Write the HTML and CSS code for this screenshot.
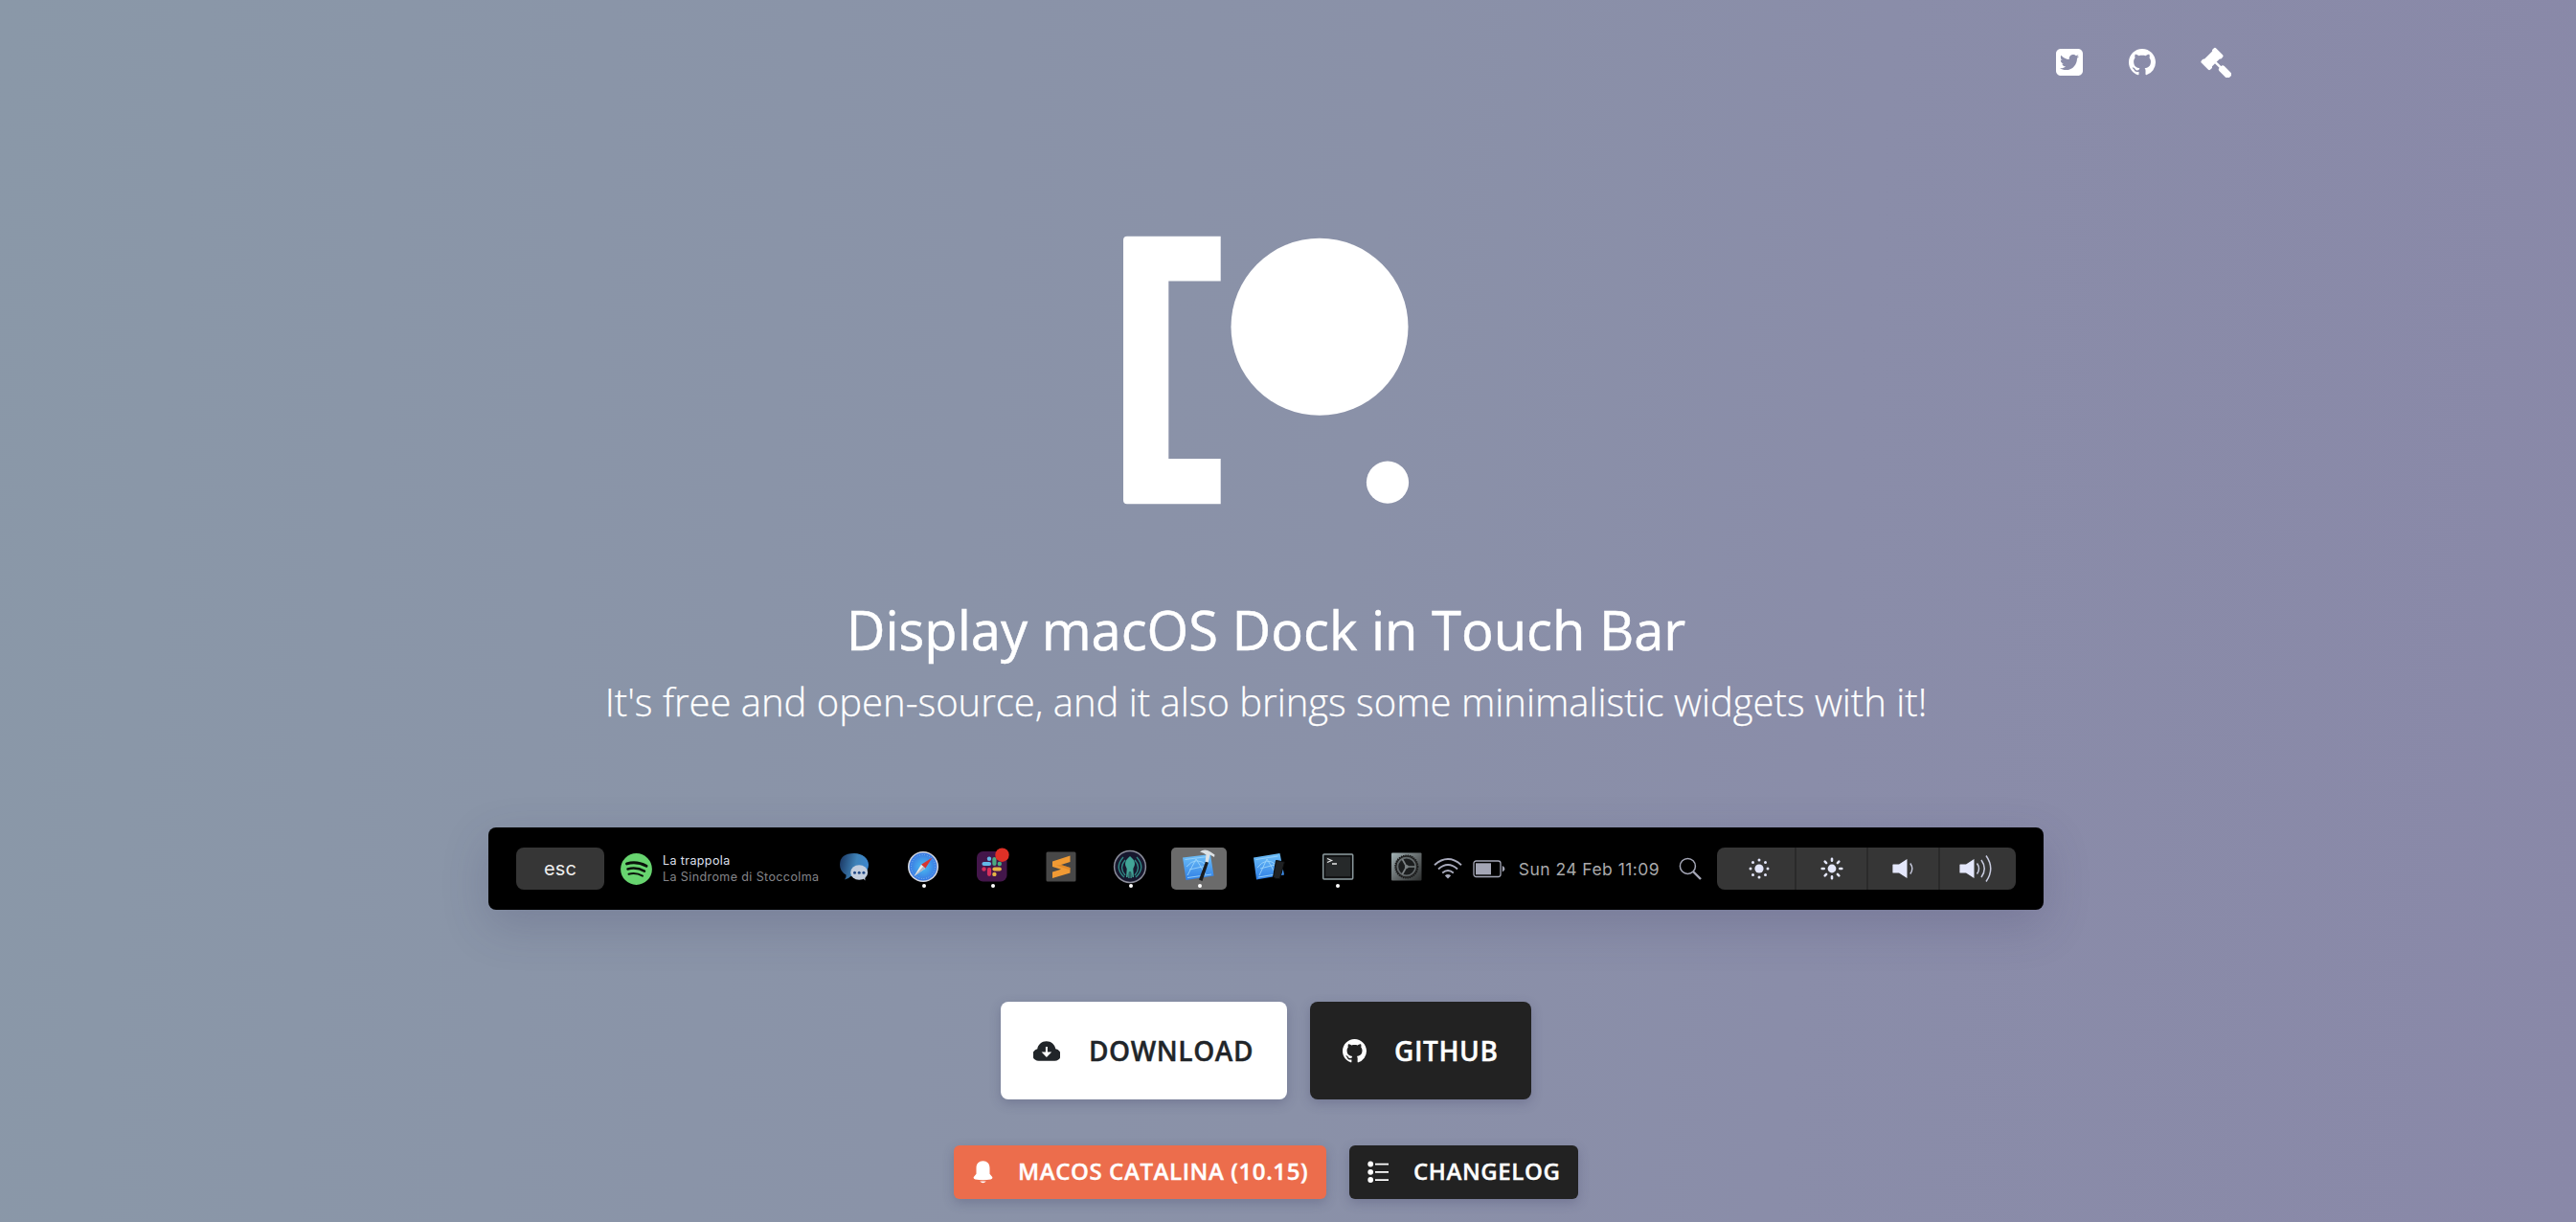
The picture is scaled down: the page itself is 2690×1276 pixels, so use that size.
FILE: index.html
```html
<!DOCTYPE html>
<html lang="en">
<head>
<meta charset="utf-8">
<title>Pock</title>
<link rel="stylesheet" href="styles.css">
</head>
<body>
<svg class="defs" aria-hidden="true">
  <defs>
    <symbol id="octocat" viewBox="0 0 16 16"><path fill="currentColor" d="M8 0C3.58 0 0 3.58 0 8c0 3.54 2.29 6.53 5.47 7.59.4.07.55-.17.55-.38 0-.19-.01-.82-.01-1.49-2.01.37-2.53-.49-2.69-.94-.09-.23-.48-.94-.82-1.13-.28-.15-.68-.52-.01-.53.63-.01 1.08.58 1.23.82.72 1.21 1.87.87 2.33.66.07-.52.28-.87.51-1.07-1.78-.2-3.64-.89-3.64-3.95 0-.87.31-1.59.82-2.15-.08-.2-.36-1.02.08-2.12 0 0 .67-.21 2.2.82.64-.18 1.32-.27 2-.27.68 0 1.36.09 2 .27 1.53-1.04 2.2-.82 2.2-.82.44 1.1.16 1.92.08 2.12.51.56.82 1.27.82 2.15 0 3.07-1.87 3.75-3.65 3.95.29.25.54.73.54 1.48 0 1.07-.01 1.93-.01 2.2 0 .21.15.46.55.38A8.013 8.013 0 0016 8c0-4.42-3.58-8-8-8z"/></symbol>
    <linearGradient id="sheet" x1="0" y1="0" x2="0" y2="1"><stop offset="0" stop-color="#6fc0f8"/><stop offset="1" stop-color="#2f7fe6"/></linearGradient>
    <linearGradient id="bubble" x1="0" y1="0.3" x2="1" y2="0.5"><stop offset="0" stop-color="#1c3a66"/><stop offset="0.55" stop-color="#3f83b8"/><stop offset="1" stop-color="#3c86cf"/></linearGradient>
    <radialGradient id="compass"><stop offset="0" stop-color="#4cc0f2"/><stop offset="1" stop-color="#3a78e2"/></radialGradient>
    <linearGradient id="metal" x1="0" y1="0" x2="1" y2="1"><stop offset="0" stop-color="#a3b3b6"/><stop offset="0.5" stop-color="#646a6b"/><stop offset="1" stop-color="#2c2e2e"/></linearGradient>
  </defs>
</svg>

<nav class="nav">
  <svg width="28" height="28" viewBox="0 32 448 448"><path fill="#fff" d="M368 32H80C35 32 0 67 0 112v288c0 45 35 80 80 80h288c45 0 80-35 80-80V112c0-45-35-80-80-80zm-16.900 158.800c.2 2.800.2 5.700.2 8.500 0 86.700-66 186.600-186.600 186.600-37.200 0-71.700-10.800-100.700-29.400 5.300.6 10.400.8 15.800.8 30.700 0 58.900-10.400 81.400-28-28.800-.6-53-19.500-61.300-45.500 10.100 1.500 19.200 1.500 29.600-1.200-30-6.100-52.500-32.500-52.500-64.400v-.8c8.700 4.900 18.900 7.900 29.600 8.300a65.447 65.447 0 0 1-29.200-54.600c0-12.200 3.200-23.400 8.900-33.100 32.300 39.800 80.800 65.800 135.200 68.600-9.300-44.500 24-80.600 64-80.600 18.900 0 35.900 7.900 47.900 20.700 14.800-2.800 29-8.300 41.600-15.800-4.900 15.200-15.200 28-28.800 36.100 13.200-1.400 26-5.100 37.800-10.200-8.900 13.100-20.100 24.700-32.900 34z"/></svg>
  <svg width="28" height="28"><use href="#octocat"/></svg>
  <svg width="32" height="32" viewBox="0 0 32 32"><g fill="#fff" transform="translate(12 12.500) rotate(45)"><rect x="-6.600" y="-10.800" width="13.200" height="5.200" rx="1.800"/><rect x="-6.600" y="5.600" width="13.200" height="5.200" rx="1.800"/><rect x="-5.600" y="-8" width="11.200" height="16"/><rect x="5" y="-1.200" width="9" height="2.400"/><rect x="12" y="-3.700" width="14.500" height="7.400" rx="2.400"/></g></svg>
</nav>

<main class="hero">
  <svg class="logo" width="300" height="282" viewBox="1172 246 300 282" fill="#fff"><path d="M1177 246.700h97.700v46.900h-54.400V479h54.400v47.300H1177a4 4 0 0 1-4-4V250.700a4 4 0 0 1 4-4z"/><circle cx="1378" cy="341.300" r="92.500"/><circle cx="1449" cy="503.600" r="22.100"/></svg>
  <h1 class="title">Display macOS Dock in Touch Bar</h1>
  <p class="subtitle">It's free and open-source, and it also brings some minimalistic widgets with it!</p>

  <div class="touchbar">
    <span class="esc">esc</span>
    <svg class="spotify" width="33" height="33" viewBox="0 0 33 33"><circle cx="16.500" cy="16.500" r="16.400" fill="#67d46f"/><g fill="none" stroke="#0a120b" stroke-linecap="round"><path stroke-width="3" d="M6.500 10.900q10.500-3 20.500 2.400"/><path stroke-width="2.500" d="M7.500 16.500q9-2.600 17.500 2.200"/><path stroke-width="2" d="M8.500 21.700q7.500-2 14.500 1.900"/></g></svg>
    <div class="track"><span>La trappola</span><span class="artist">La Sindrome di Stoccolma</span></div>

    <div class="dock">
      <div class="app"><svg width="34" height="34" viewBox="0 0 34 34"><path fill="url(#bubble)" d="M17 3c8.500 0 15 5 15 12s-6.500 12.500-15 12.500q-2 0-3.700-.4Q11 30 7 30.500 9 28 8.500 25.500 2 22 2 15 2 3 17 3z"/><ellipse cx="22.200" cy="23" rx="9" ry="7.700" fill="#c3cede"/><path fill="#c3cede" d="M25 28l3.500 3.500-.5-5z"/><g fill="#234a86"><circle cx="17.500" cy="23.300" r="1.500"/><circle cx="22.200" cy="23.300" r="1.500"/><circle cx="26.900" cy="23.300" r="1.500"/></g></svg></div>
      <div class="app running"><svg width="34" height="34" viewBox="0 0 34 34"><circle cx="17" cy="17" r="16" fill="#d3d7df"/><circle cx="17" cy="17" r="14.400" fill="url(#compass)"/><circle cx="17" cy="17" r="12.500" fill="none" stroke="#8fc4f2" stroke-width="1" stroke-dasharray=".8 1.800"/><path fill="#d9352f" d="M26.500 7.500L19.300 18.700l-4.300-4z"/><path fill="#f1ede9" d="M7.500 27L15 14.700l4.300 4z"/><path fill="#a8b4c4" d="M7.500 27l9.700-10.200 2.100 1.900z"/></svg></div>
      <div class="app running"><svg width="34" height="40" viewBox="0 -3 34 40" overflow="visible"><rect x="1" y="1" width="31.500" height="31.500" rx="6.500" fill="#43164a"/><g stroke-width="4.200" stroke-linecap="round"><path stroke="#63b9e8" d="M8.500 14h5.500"/><path stroke="#4aab80" d="M19.400 9v5"/><path stroke="#e5b545" d="M19.500 19.500h5.300"/><path stroke="#d6305c" d="M14 19.800v5"/></g><g><circle cx="14" cy="8.800" r="2.200" fill="#63b9e8"/><circle cx="24.800" cy="14" r="2.200" fill="#4aab80"/><circle cx="19.400" cy="24.900" r="2.200" fill="#e5b545"/><circle cx="8.500" cy="19.500" r="2.200" fill="#d6305c"/></g><circle cx="27.500" cy="4.700" r="7.200" fill="#df3026"/></svg></div>
      <div class="app"><svg width="34" height="34" viewBox="0 0 34 34"><rect x="1.500" y="1.500" width="31" height="31" rx="1.500" fill="#484848"/><path fill="#f09a34" d="M8 11.500L26.500 5.500v6.500l-9.500 3 9.500 3v5.500L8 29v-6.500l9-2.800-9-2.700z"/><path fill="#d67b1e" d="M17 15l9.500 3v2.500L12 15.500z" opacity=".5"/></svg></div>
      <div class="app running"><svg width="36" height="36" viewBox="0 0 36 36"><circle cx="18" cy="18" r="16.400" fill="#17182e" stroke="#8a8c99" stroke-width="1.500"/><g fill="none" stroke="#2f8783" stroke-width="1.400"><path d="M11 8Q1 19 12 29M13 11q-7 8 0 16M25 8q10 11-1 21M23 11q7 8 0 16"/></g><path fill="#42a597" d="M18 7c3 2.500 5 5 5 8 0 2.500-1.500 3.500-1.700 5.500L22 29h-1.500l-.8-6v7h-1.200v-7h-1v7h-1.200v-7l-.8 6H14l.7-8.500C14.500 18.500 13 17.500 13 15c0-3 2-5.500 5-8z"/></svg></div>
      <div class="app running active"><svg width="58" height="44" viewBox="0 0 58 44"><path fill="url(#sheet)" d="M12 10.500L41 7l3.500 22.500L15.500 34z"/><path fill="none" stroke="#9bd4fb" stroke-width=".9" d="M14.500 12.500l24-3M17 31.500l25-3.500M17 29L26 12l10 16M19 23l18-4M16 20q10-12 22-1"/><path fill="#191b1d" d="M36 14.500l3 1-6.500 19.500-3.500-1.500z"/><path fill="#dce1e4" d="M30 4.500q5-4 11 0l4.500 3-.5 2.500-4.500-2.500-1.700 8-3.300-.8 1-7.200q-2.500-2-6.500-3z"/></svg></div>
      <div class="app"><svg width="36" height="34" viewBox="0 0 36 34"><path fill="url(#sheet)" d="M2 7.500L29.500 3 34 25.500 5 30.500z"/><path fill="none" stroke="#9bd4fb" stroke-width=".9" d="M4.500 9.500l23-3.500M7 28l24-4M8 26l8-17 9 15M9 19l15-4M6 18q9-12 20-3"/><path fill="#1f2123" stroke="#08090a" d="M25.500 10.500l9 1.500-5 17.500q-4 1-7-1.500z"/></svg></div>
      <div class="app running"><svg width="34" height="30" viewBox="0 0 34 30"><rect x="1.700" y="2" width="31" height="26" rx="1" fill="#26292a" stroke="#8b999d" stroke-width="1.500"/><rect x="3.500" y="4" width="27.400" height="22" fill="none" stroke="#08090a" stroke-width="1.300"/><path fill="none" stroke="#e6e6e6" stroke-width="1.300" d="M6 6.500l4.500 2L6 10.500M11 12h5"/></svg></div>
      <div class="app"><svg width="34" height="34" viewBox="0 0 34 34"><rect x="1" y="2.500" width="31.500" height="29" rx="1" fill="url(#metal)"/><circle cx="16.800" cy="17" r="11.600" fill="none" stroke="#17191a" stroke-width="2" stroke-dasharray="1.300 1"/><circle cx="16.800" cy="17" r="9.300" fill="#1b1d1e" stroke="#62686a" stroke-width="1.500"/><circle cx="16.800" cy="17" r="11" fill="none" stroke="#222" stroke-width="1.300"/><path stroke="#7b8183" stroke-width="1.700" d="M16.800 17h9M16.800 17l-4.500-8M16.800 17l-4.500 8"/><circle cx="16.800" cy="17" r="2" fill="#7b8183"/></svg></div>
    </div>

    <svg class="wifi" width="30" height="22" viewBox="0 0 30 22" fill="none" stroke="#a9abbc" stroke-width="1.900"><path d="M1 7.200Q15-5 29 7.200M5 11.500q10-8.800 20 0M9.200 15.500q5.800-4.800 11.600 0"/><path fill="#a9abbc" stroke="none" d="M11.800 18.200q3.200-2.500 6.400 0L15 21.500z"/></svg>
    <svg class="battery" width="34" height="19" viewBox="0 0 34 19"><rect x="1" y="1" width="28" height="16.500" rx="2.500" fill="none" stroke="#a4a6b6" stroke-width="1.300"/><rect x="3" y="3.300" width="16" height="12" fill="#a4a6b6"/><path fill="#a4a6b6" d="M30.800 6q2.500.8 2.500 3.200t-2.500 3.300z"/></svg>
    <span class="clock">Sun 24 Feb 11:09</span>
    <svg class="search" width="24" height="24" viewBox="0 0 24 24" fill="none" stroke="#a4a6b6"><circle cx="9.400" cy="9.400" r="8" stroke-width="1.500"/><path stroke-width="2.400" d="M15 15l8 8"/></svg>

    <div class="controls">
      <span class="control dim"><svg width="24" height="24" viewBox="-12 -12 24 24" fill="#e4e7fb"><circle r="4.600"/><circle cy="-9" r="1.500"/><circle cy="9" r="1.500"/><circle cx="-9" r="1.500"/><circle cx="9" r="1.500"/><circle cx="-6.500" cy="-6.500" r="1.500"/><circle cx="6.500" cy="-6.500" r="1.500"/><circle cx="-6.500" cy="6.500" r="1.500"/><circle cx="6.500" cy="6.500" r="1.500"/></svg></span>
      <span class="control"><svg width="24" height="24" viewBox="-12 -12 24 24" fill="#e4e7fb"><circle r="4.400"/><path fill="none" stroke="#e4e7fb" stroke-width="2.600" stroke-linecap="round" d="M0-10.300v2M0 10.300v-2M-10.300 0h2M10.300 0h-2M-7.300-7.300l1.400 1.400M7.300-7.300L5.900-5.900M-7.300 7.300l1.400-1.400M7.300 7.300L5.900 5.900"/></svg></span>
      <span class="control"><svg width="24" height="28" viewBox="0 0 24 28"><path fill="#e4e7fb" d="M1 9.500h6L15.500 4v20L7 18.500H1q-.6 0-.6-.6v-7.800q0-.6.6-.6z"/><path fill="none" stroke="#c9cce0" stroke-width="1.400" d="M18.800 8.500q4 5.500 0 11"/></svg></span>
      <span class="control loud"><svg width="35" height="30" viewBox="0 0 35 30"><path fill="#e4e7fb" d="M1 10.500h6L15.500 5v20L7 19.500H1q-.6 0-.6-.6v-7.800q0-.6.6-.6z"/><path fill="none" stroke="#c9cce0" stroke-width="1.500" d="M18.500 9.500q4 5.500 0 11M23 6q6.500 9 0 18M28 1.500q9.500 13.500 0 27"/></svg></span>
    </div>
  </div>

  <div class="buttons large">
    <a class="btn white"><svg width="28" height="21" viewBox="0 0 28 21"><path fill="#212529" d="M6.500 20.700A6.300 6.300 0 0 1 4.300 8.300C5 3.500 9 .2 13.700.2c5 0 8.800 3.300 9.600 8A6.300 6.300 0 0 1 21.500 20.700z"/><path fill="#fff" d="M12.900 6h2v5.500h4.300L13.900 17l-5.300-5.500h4.300z"/></svg><span>DOWNLOAD</span></a>
    <a class="btn dark"><svg width="25" height="25"><use href="#octocat"/></svg><span>GITHUB</span></a>
  </div>
  <div class="buttons small">
    <a class="btn coral"><svg width="21" height="24" viewBox="0 0 21 24" fill="#fff"><path d="M10.500.2c4.300 0 7 3 7 7.300v6.300l2.700 3.200q.8 1.800-1.500 2.400-8.200 1.600-16.400 0Q0 18.800.8 17l2.700-3.200V7.500c0-4.300 2.700-7.300 7-7.300zM7.200 21.500h6.600q-3.300 3.600-6.600 0z"/></svg><span>MACOS CATALINA (10.15)</span></a>
    <a class="btn dark"><svg width="23" height="24" viewBox="0 0 23 24" fill="#fff"><circle cx="3.200" cy="3.500" r="2.900"/><circle cx="3.200" cy="11.800" r="2.900"/><circle cx="3.200" cy="20" r="2.900"/><path d="M8 2.700h14v1.800H8zM8 11h14v1.800H8zM8 19.200h14V21H8z"/></svg><span>CHANGELOG</span></a>
  </div>
</main>
</body>
</html>
```
FILE: styles.css
```css
* { box-sizing: border-box; }

body {
  margin: 0;
  height: 1276px;
  overflow: hidden;
  padding-right: 46px;
  background: linear-gradient(96deg, #8a98a8 0%, #8a94a8 30%, #8a91a8 52%, #8a8da9 70%, #8988a8 100%);
  color: #fff;
  font-family: "Open Sans", sans-serif;
}

.defs { position: absolute; width: 0; height: 0; }
svg { display: block; flex: none; }

.nav {
  display: flex;
  justify-content: flex-end;
  align-items: center;
  gap: 47.5px;
  height: 129px;
  padding: 0 314px 0 0;
}

.hero { display: flex; flex-direction: column; align-items: center; }
.logo { margin-top: 117px; }

.title {
  margin: 89px 0 0;
  font-size: 56.1px;
  font-weight: 400;
  line-height: 80px;
  white-space: nowrap;
  -webkit-text-stroke: 0.5px #fff;
}

.subtitle {
  margin: 6px 0 0;
  font-size: 40px;
  font-weight: 300;
  line-height: 60px;
  white-space: nowrap;
  -webkit-text-stroke: 0.25px #fff;
}

.touchbar {
  display: flex;
  align-items: center;
  width: 1624px;
  height: 86px;
  margin-top: 101px;
  padding: 0 29px;
  border-radius: 8px;
  background: #000;
  box-shadow: 0 16px 48px rgba(60, 60, 100, 0.22);
  font-family: Inter, sans-serif;
}

.esc {
  width: 92px;
  height: 44px;
  border-radius: 8px;
  background: #363636;
  color: #eee;
  font-size: 20px;
  line-height: 44px;
  letter-spacing: 0.2px;
  text-align: center;
}

.spotify { margin-left: 17px; }

.track {
  display: flex;
  flex-direction: column;
  width: 172px;
  margin-left: 11px;
  color: #dfe0ee;
  font-size: 12.5px;
  line-height: 17px;
  letter-spacing: 0.4px;
  white-space: nowrap;
}
.artist { color: #85868a; }

.dock { display: flex; gap: 16.1px; height: 44px; }
.app {
  position: relative;
  display: flex;
  align-items: center;
  justify-content: center;
  width: 56px;
  height: 40px;
}
.app.active { height: 44px; }
.app.active svg { border-radius: 5px; background: #6b6b6b; }
.app.running::after {
  content: "";
  position: absolute;
  left: 26.5px;
  top: 38px;
  width: 4px;
  height: 4px;
  border-radius: 50%;
  background: #fff;
}

.battery { margin-left: 11px; }
.clock {
  width: 150px;
  margin-left: 14px;
  color: #a9a9ab;
  font-size: 17.5px;
  letter-spacing: 0.45px;
  white-space: nowrap;
}
.search { margin-left: 17px; }

.controls {
  display: flex;
  width: 312px;
  height: 44px;
  margin-left: auto;
  border-radius: 8px;
  background: #363636;
}
.control {
  display: flex;
  align-items: center;
  justify-content: center;
  width: 75px;
  border-left: 2px solid #2a2a2a;
}
.control.dim { width: 81px; padding-left: 6px; border-left: 0; }
.control.loud { width: 81px; padding-right: 4px; }

.buttons { display: flex; gap: 24px; }
.buttons.large { margin-top: 96px; }
.buttons.small { margin-top: 48px; }

.btn {
  display: flex;
  align-items: center;
  border-radius: 8px;
  box-shadow: 0 4px 12px rgba(50, 50, 93, 0.25);
  font-weight: 600;
  letter-spacing: 0.6px;
  white-space: nowrap;
  -webkit-text-stroke: 0.4px currentColor;
}
.large .btn { width: 231px; height: 102px; padding-left: 34px; gap: 29px; font-size: 28px; }
.large .white { width: 299px; gap: 30px; }
.small .btn { width: 239px; height: 56px; padding-left: 19px; gap: 25px; border-radius: 6px; font-size: 24px; }
.small .coral { width: 389px; padding-left: 20px; gap: 26px; }
.small .btn span { padding-bottom: 3px; }
.white { background: #fff; color: #212529; }
.dark { background: #222; }
.coral { background: #ec6d4c; }
```
